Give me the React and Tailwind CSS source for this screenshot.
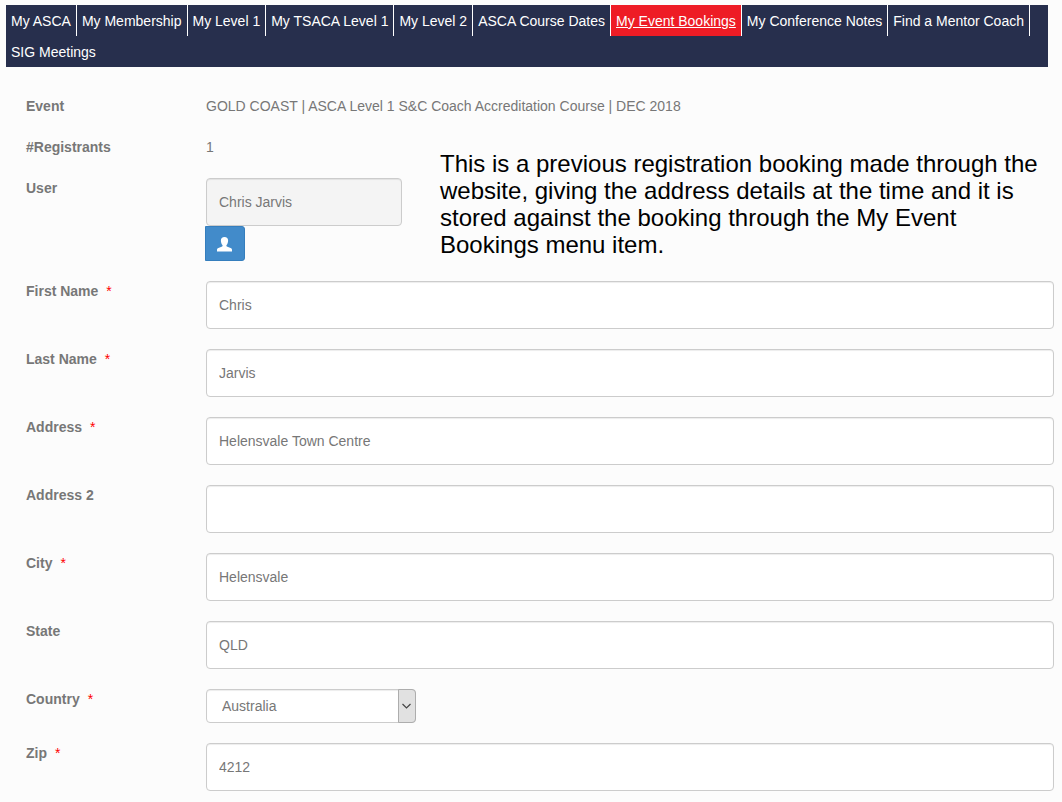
import React, { useState } from 'react';

const menuItems = [
  'My ASCA',
  'My Membership',
  'My Level 1',
  'My TSACA Level 1',
  'My Level 2',
  'ASCA Course Dates',
  'My Event Bookings',
  'My Conference Notes',
  'Find a Mentor Coach',
  'SIG Meetings',
];

const inputClass =
  'block h-12 w-full rounded border border-[#cccccc] bg-white px-3 text-[#777777] shadow-[inset_0_1px_1px_rgba(0,0,0,0.075)] outline-none focus:border-[#66afe9]';

const MenuBar = ({ active }) => (
  <nav className="mr-2 bg-[#272f4d]">
    <ul className="flex flex-wrap">
      {menuItems.map((item, index) => (
        <li key={item} className={index < menuItems.length - 1 ? 'border-r border-white' : ''}>
          <a
            href="#"
            className={`block px-[5px] pt-[6px] pb-1 text-white hover:bg-[#ee1c25] hover:underline ${
              item === active ? 'bg-[#ee1c25] underline' : ''
            }`}
          >
            {item}
          </a>
        </li>
      ))}
    </ul>
  </nav>
);

const Row = ({ label, htmlFor, required, children }) => (
  <div className="flex">
    {htmlFor ? (
      <label htmlFor={htmlFor} className="w-[180px] shrink-0 font-bold">
        {label}
        {required && <span className="ml-2 font-normal text-[#ff0000]">*</span>}
      </label>
    ) : (
      <span className="w-[180px] shrink-0 font-bold">{label}</span>
    )}
    <div className="min-w-0 flex-1">{children}</div>
  </div>
);

const TextRow = ({ id, label, required, value }) => (
  <Row label={label} htmlFor={id} required={required}>
    <input id={id} name={id} type="text" defaultValue={value} required={required} className={inputClass} />
  </Row>
);

const UserIcon = () => (
  <svg width="16" height="16" viewBox="0 0 16 16" fill="currentColor" aria-hidden="true">
    <path d="M7.500 1C5.200 1 3.900 2.300 3.900 4.600c0 1.900.6 3.500 1.500 4.500.3.400.3 1.100-.2 1.400L1.400 12c-.9.400-1.400 1-1.400 1.900V15.500h15v-1.600c0-.9-.5-1.500-1.400-1.900l-3.800-1.500c-.5-.3-.5-1-.2-1.400.9-1 1.500-2.600 1.500-4.500C11.100 2.300 9.800 1 7.500 1z" />
  </svg>
);

const CountrySelect = () => {
  const [country, setCountry] = useState('Australia');

  return (
    <div className="relative w-[210px]">
      <select
        id="country"
        value={country}
        onChange={(e) => setCountry(e.target.value)}
        className="block h-[34px] w-full appearance-none rounded border border-[#cccccc] bg-white pr-6 pl-[15px] text-[#777777] shadow-[inset_0_1px_1px_rgba(0,0,0,0.075)] outline-none"
      >
        <option>Australia</option>
        <option>New Zealand</option>
      </select>
      <span className="pointer-events-none absolute inset-y-0 right-0 flex w-[18px] items-center justify-center rounded-r border border-[#adadad] bg-[#e1e1e1]">
        <svg width="10" height="6" viewBox="0 0 10 6" fill="none" stroke="#444444" strokeWidth="1.2" aria-hidden="true">
          <path d="M0.500 1l4 4 4-4" />
        </svg>
      </span>
    </div>
  );
};

const App = () => {
  return (
    <div className="min-h-screen bg-[#fcfcfc] px-[6px] pt-[5px] pb-[11px] font-['Liberation_Sans',Arial,sans-serif] text-[14px] leading-[21px] text-[#777777]">
      <MenuBar active="My Event Bookings" />

      <form className="mt-[29px] mr-[2px] ml-5 flex flex-col gap-5">
        <Row label="Event">GOLD COAST | ASCA Level 1 S&amp;C Coach Accreditation Course | DEC 2018</Row>

        <div className="flex">
          <div className="flex w-[414px] shrink-0 flex-col gap-5">
            <Row label="#Registrants">1</Row>
            <Row label="User" htmlFor="user">
              <div className="w-[196px]">
                <input
                  id="user"
                  type="text"
                  readOnly
                  defaultValue="Chris Jarvis"
                  className="block h-12 w-full rounded border border-[#cccccc] bg-[#f4f4f4] px-3 shadow-[inset_0_1px_1px_rgba(0,0,0,0.075)] outline-none"
                />
              </div>
              <button
                type="button"
                aria-label="Select User"
                className="-ml-px flex h-[35px] w-10 items-center justify-center rounded-r-[3px] border border-[#357ebd] bg-[#428bca] text-white hover:bg-[#3071a9]"
              >
                <UserIcon />
              </button>
            </Row>
          </div>
          <p className="pt-[13px] text-[24px] leading-[27px] text-black">
            This is a previous registration booking made through the website, giving the address details at the time
            and it is stored against the booking through the My Event Bookings menu item.
          </p>
        </div>

        <TextRow id="first_name" label="First Name" required value="Chris" />
        <TextRow id="last_name" label="Last Name" required value="Jarvis" />
        <TextRow id="address" label="Address" required value="Helensvale Town Centre" />
        <TextRow id="address2" label="Address 2" value="" />
        <TextRow id="city" label="City" required value="Helensvale" />
        <TextRow id="state" label="State" value="QLD" />
        <Row label="Country" htmlFor="country" required>
          <CountrySelect />
        </Row>
        <TextRow id="zip" label="Zip" required value="4212" />
      </form>
    </div>
  );
};

export default App;
